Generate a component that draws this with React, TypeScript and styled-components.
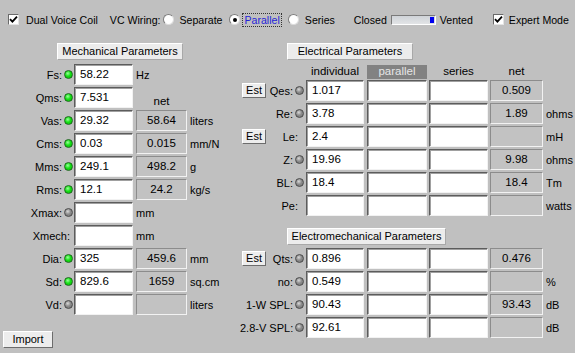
import React from 'react'
import styled, { createGlobalStyle } from 'styled-components'

const GlobalStyle = createGlobalStyle`
  html, body {
    margin: 0;
    padding: 0;
    background: #c0c0c0;
  }
  body {
    font-family: "Liberation Sans", Arial, sans-serif;
    font-size: 11px;
    color: #000;
  }
`

const Window = styled.div`
  width: 575px;
  height: 353px;
  background: #c0c0c0;
  overflow: hidden;
`

const TopBar = styled.div`
  display: flex;
  align-items: center;
  height: 19px;
  padding: 10px 0 0 8px;
  white-space: nowrap;
  font-size: 10.6px;
`

const Option = styled.label<{ $ml?: number; $gap: number }>`
  display: flex;
  align-items: center;
  gap: ${p => p.$gap}px;
  margin-left: ${p => p.$ml ?? 0}px;
`

const Caption = styled.span<{ $ml: number }>`
  margin-left: ${p => p.$ml}px;
`

const CheckBox = styled.span`
  width: 11px;
  height: 11px;
  box-sizing: border-box;
  background: #fff;
  border: 1px solid;
  border-color: #6a6a6a #e4e4e4 #e4e4e4 #6a6a6a;
  display: flex;
  align-items: center;
  justify-content: center;
`

const Radio = styled.span<{ $on?: boolean }>`
  width: 11px;
  height: 11px;
  box-sizing: border-box;
  border-radius: 50%;
  background: #fff;
  border: 1px solid;
  border-color: #7c7c7c #dcdcdc #dcdcdc #7c7c7c;
  display: flex;
  align-items: center;
  justify-content: center;

  &::after {
    content: '';
    display: ${p => (p.$on ? 'block' : 'none')};
    width: 4px;
    height: 4px;
    border-radius: 50%;
    background: #000;
  }
`

const FocusText = styled.span`
  color: #2424d8;
  outline: 1px dotted #333;
  outline-offset: 0;
  padding: 0 1px;
`

const Slider = styled.span`
  width: 45px;
  height: 10px;
  box-sizing: border-box;
  margin-left: 4px;
  border: 1px solid;
  border-color: #7a7a7a #ffffff #ffffff #7a7a7a;
  background: linear-gradient(#cfd3d8, #e2e4e6);
  display: flex;
  justify-content: flex-end;
  align-items: center;
  padding-right: 1px;

  &::after {
    content: '';
    width: 4px;
    height: 6px;
    background: #0000f0;
  }
`

const Main = styled.div`
  display: flex;
  margin-top: 14px;
`

const LeftPanel = styled.div`
  width: 240px;
  display: flex;
  flex-direction: column;
`

const RightPanel = styled.div`
  flex: 1;
  display: flex;
  flex-direction: column;
`

const SectionTitle = styled.div<{ $w: number; $ml?: number }>`
  width: ${p => p.$w}px;
  height: 17px;
  box-sizing: border-box;
  margin-left: ${p => (p.$ml === undefined ? 'auto' : `${p.$ml}px`)};
  margin-right: ${p => (p.$ml === undefined ? 'auto' : '0')};
  background: #ececec;
  border: 1px solid;
  border-color: #ffffff #a8a8a8 #a8a8a8 #ffffff;
  text-align: center;
  line-height: 15px;
  white-space: nowrap;
`

const Rows = styled.div<{ $mt: number }>`
  display: flex;
  flex-direction: column;
  margin-top: ${p => p.$mt}px;
`

const Row = styled.div`
  display: flex;
  align-items: center;
  height: 23px;
`

const Lead = styled.div<{ $w: number }>`
  width: ${p => p.$w}px;
  display: flex;
  align-items: center;
  white-space: nowrap;
`

const Label = styled.span`
  margin-left: auto;
  text-align: right;
`

const LedCell = styled.div<{ $w: number }>`
  width: ${p => p.$w}px;
  display: flex;
  align-items: center;
  justify-content: center;
`

const Led = styled.span<{ $tone: 'green' | 'gray' }>`
  width: 9px;
  height: 9px;
  box-sizing: border-box;
  border-radius: 50%;
  border: 1px solid ${p => (p.$tone === 'green' ? '#1c6a1c' : '#4a4a4a')};
  background: ${p =>
    p.$tone === 'green'
      ? 'radial-gradient(circle at 40% 35%, #9cff9c 0, #16e016 45%, #08b808 100%)'
      : 'radial-gradient(circle at 40% 35%, #d8d8d8 0, #8c8c8c 45%, #707070 100%)'};
`

const Field = styled.div<{ $w: number; $ml?: number }>`
  width: ${p => p.$w}px;
  height: 21px;
  box-sizing: border-box;
  margin-left: ${p => p.$ml ?? 0}px;
  background: #fff;
  border: 1px solid;
  border-color: #5c5c5c #f2f2f2 #f2f2f2 #5c5c5c;
  box-shadow: inset 1px 1px 0 #a0a0a0;
  padding-left: 5px;
  line-height: 19px;
  font-size: 11.5px;
`

const NetBox = styled.div<{ $w: number; $ml: number }>`
  width: ${p => p.$w}px;
  height: 21px;
  box-sizing: border-box;
  margin-left: ${p => p.$ml}px;
  background: #c2c2c2;
  border: 1px solid;
  border-color: #8c8c8c #f2f2f2 #f2f2f2 #8c8c8c;
  text-align: center;
  line-height: 18px;
  font-size: 11.5px;
`

const NetHead = styled.div<{ $w: number; $ml: number }>`
  width: ${p => p.$w}px;
  margin-left: ${p => p.$ml}px;
  align-self: flex-end;
  text-align: center;
  font-size: 11.5px;
  line-height: 14px;
  margin-bottom: 1px;
`

const Unit = styled.span`
  margin-left: 3px;
  white-space: nowrap;
`

const ColHeads = styled.div`
  display: flex;
  align-items: flex-end;
  height: 19px;
  padding-left: 66px;
`

const ColHead = styled.div<{ $w: number; $ml: number; $active?: boolean }>`
  width: ${p => p.$w}px;
  margin-left: ${p => p.$ml}px;
  height: 14px;
  line-height: 13px;
  text-align: center;
  font-size: 11.5px;
  background: ${p => (p.$active ? '#828282' : 'transparent')};
  color: ${p => (p.$active ? '#e6e6e6' : '#000')};
`

const Button = styled.button<{ $w: number; $h: number; $ml?: number; $mt?: number }>`
  width: ${p => p.$w}px;
  height: ${p => p.$h}px;
  margin: ${p => p.$mt ?? 0}px 0 0 ${p => p.$ml ?? 0}px;
  padding: 0;
  box-sizing: border-box;
  font-family: "Liberation Sans", Arial, sans-serif;
  font-size: 11px;
  color: #000;
  background: #ededed;
  border: 1px solid;
  border-color: #ffffff #6c6c6c #6c6c6c #ffffff;
  line-height: 1;
`

type Tone = 'green' | 'gray'

interface MechRow {
  label: string
  led?: Tone
  value: string
  net?: string
  netHead?: boolean
  unit?: string
}

interface ElecRow {
  est?: boolean
  label: string
  led?: Tone
  value: string
  net: string
  unit?: string
}

const mechRows: MechRow[] = [
  { label: 'Fs:', led: 'green', value: '58.22', unit: 'Hz' },
  { label: 'Qms:', led: 'green', value: '7.531', netHead: true },
  { label: 'Vas:', led: 'green', value: '29.32', net: '58.64', unit: 'liters' },
  { label: 'Cms:', led: 'green', value: '0.03', net: '0.015', unit: 'mm/N' },
  { label: 'Mms:', led: 'green', value: '249.1', net: '498.2', unit: 'g' },
  { label: 'Rms:', led: 'green', value: '12.1', net: '24.2', unit: 'kg/s' },
  { label: 'Xmax:', led: 'gray', value: '', unit: 'mm' },
  { label: 'Xmech:', value: '', unit: 'mm' },
  { label: 'Dia:', led: 'green', value: '325', net: '459.6', unit: 'mm' },
  { label: 'Sd:', led: 'green', value: '829.6', net: '1659', unit: 'sq.cm' },
  { label: 'Vd:', led: 'gray', value: '', net: '', unit: 'liters' }
]

const elecRows: ElecRow[] = [
  { est: true, label: 'Qes:', led: 'gray', value: '1.017', net: '0.509' },
  { label: 'Re:', led: 'gray', value: '3.78', net: '1.89', unit: 'ohms' },
  { est: true, label: 'Le:', value: '2.4', net: '', unit: 'mH' },
  { label: 'Z:', led: 'gray', value: '19.96', net: '9.98', unit: 'ohms' },
  { label: 'BL:', led: 'gray', value: '18.4', net: '18.4', unit: 'Tm' },
  { label: 'Pe:', value: '', net: '', unit: 'watts' }
]

const emRows: ElecRow[] = [
  { est: true, label: 'Qts:', led: 'gray', value: '0.896', net: '0.476' },
  { label: 'no:', led: 'gray', value: '0.549', net: '', unit: '%' },
  { label: '1-W SPL:', led: 'gray', value: '90.43', net: '93.43', unit: 'dB' },
  { label: '2.8-V SPL:', led: 'gray', value: '92.61', net: '', unit: 'dB' }
]

const Check = () => (
  <CheckBox>
    <svg width='9' height='9' viewBox='0 0 9 9'>
      <path d='M1 4.2 L3.4 6.6 L8 1.6' fill='none' stroke='#000' strokeWidth='1.8' />
    </svg>
  </CheckBox>
)

const MechLine: React.FC<{ row: MechRow }> = ({ row }) => (
  <Row>
    <Lead $w={row.led ? 62 : 70}>
      <Label>{row.label}</Label>
    </Lead>
    <LedCell $w={row.led ? 12 : 4}>{row.led && <Led $tone={row.led} />}</LedCell>
    <Field $w={59}>{row.value}</Field>
    {row.netHead && <NetHead $w={51} $ml={3}>net</NetHead>}
    {row.net !== undefined && <NetBox $w={51} $ml={3}>{row.net}</NetBox>}
    {row.unit && <Unit>{row.unit}</Unit>}
  </Row>
)

const ElecLine: React.FC<{ row: ElecRow }> = ({ row }) => (
  <Row>
    <Lead $w={row.led ? 53 : 58}>
      {row.est && <Button $w={24} $h={15} $ml={2}>Est</Button>}
      <Label>{row.label}</Label>
    </Lead>
    <LedCell $w={row.led ? 13 : 8}>{row.led && <Led $tone={row.led} />}</LedCell>
    <Field $w={58}>{row.value}</Field>
    <Field $w={60} $ml={3} />
    <Field $w={59} $ml={2} />
    <NetBox $w={53} $ml={2}>{row.net}</NetBox>
    {row.unit && <Unit>{row.unit}</Unit>}
  </Row>
)

const App: React.FC = () => {
  return (
    <Window>
      <GlobalStyle />
      <TopBar>
        <Option $gap={7}>
          <Check />
          <span>Dual Voice Coil</span>
        </Option>
        <Caption $ml={12}>VC Wiring:</Caption>
        <Option $ml={3} $gap={5}>
          <Radio />
          <span>Separate</span>
        </Option>
        <Option $ml={7} $gap={3}>
          <Radio $on />
          <FocusText>Parallel</FocusText>
        </Option>
        <Option $ml={7} $gap={6}>
          <Radio />
          <span>Series</span>
        </Option>
        <Caption $ml={19}>Closed</Caption>
        <Slider />
        <Caption $ml={4}>Vented</Caption>
        <Option $ml={20} $gap={5}>
          <Check />
          <span>Expert Mode</span>
        </Option>
      </TopBar>

      <Main>
        <LeftPanel>
          <SectionTitle $w={126}>Mechanical Parameters</SectionTitle>
          <Rows $mt={3}>
            {mechRows.map(r => (
              <MechLine key={r.label} row={r} />
            ))}
          </Rows>
          <Button $w={50} $h={17} $ml={3} $mt={15}>Import</Button>
        </LeftPanel>

        <RightPanel>
          <SectionTitle $w={126} $ml={47}>Electrical Parameters</SectionTitle>
          <ColHeads>
            <ColHead $w={58} $ml={0}>individual</ColHead>
            <ColHead $w={60} $ml={3} $active>parallel</ColHead>
            <ColHead $w={59} $ml={2}>series</ColHead>
            <ColHead $w={53} $ml={2}>net</ColHead>
          </ColHeads>
          <Rows $mt={0}>
            {elecRows.map(r => (
              <ElecLine key={r.label} row={r} />
            ))}
          </Rows>
          <Rows $mt={11}>
            <SectionTitle $w={159} $ml={47}>Electromechanical Parameters</SectionTitle>
          </Rows>
          <Rows $mt={2}>
            {emRows.map(r => (
              <ElecLine key={r.label} row={r} />
            ))}
          </Rows>
        </RightPanel>
      </Main>
    </Window>
  )
}

export default App
